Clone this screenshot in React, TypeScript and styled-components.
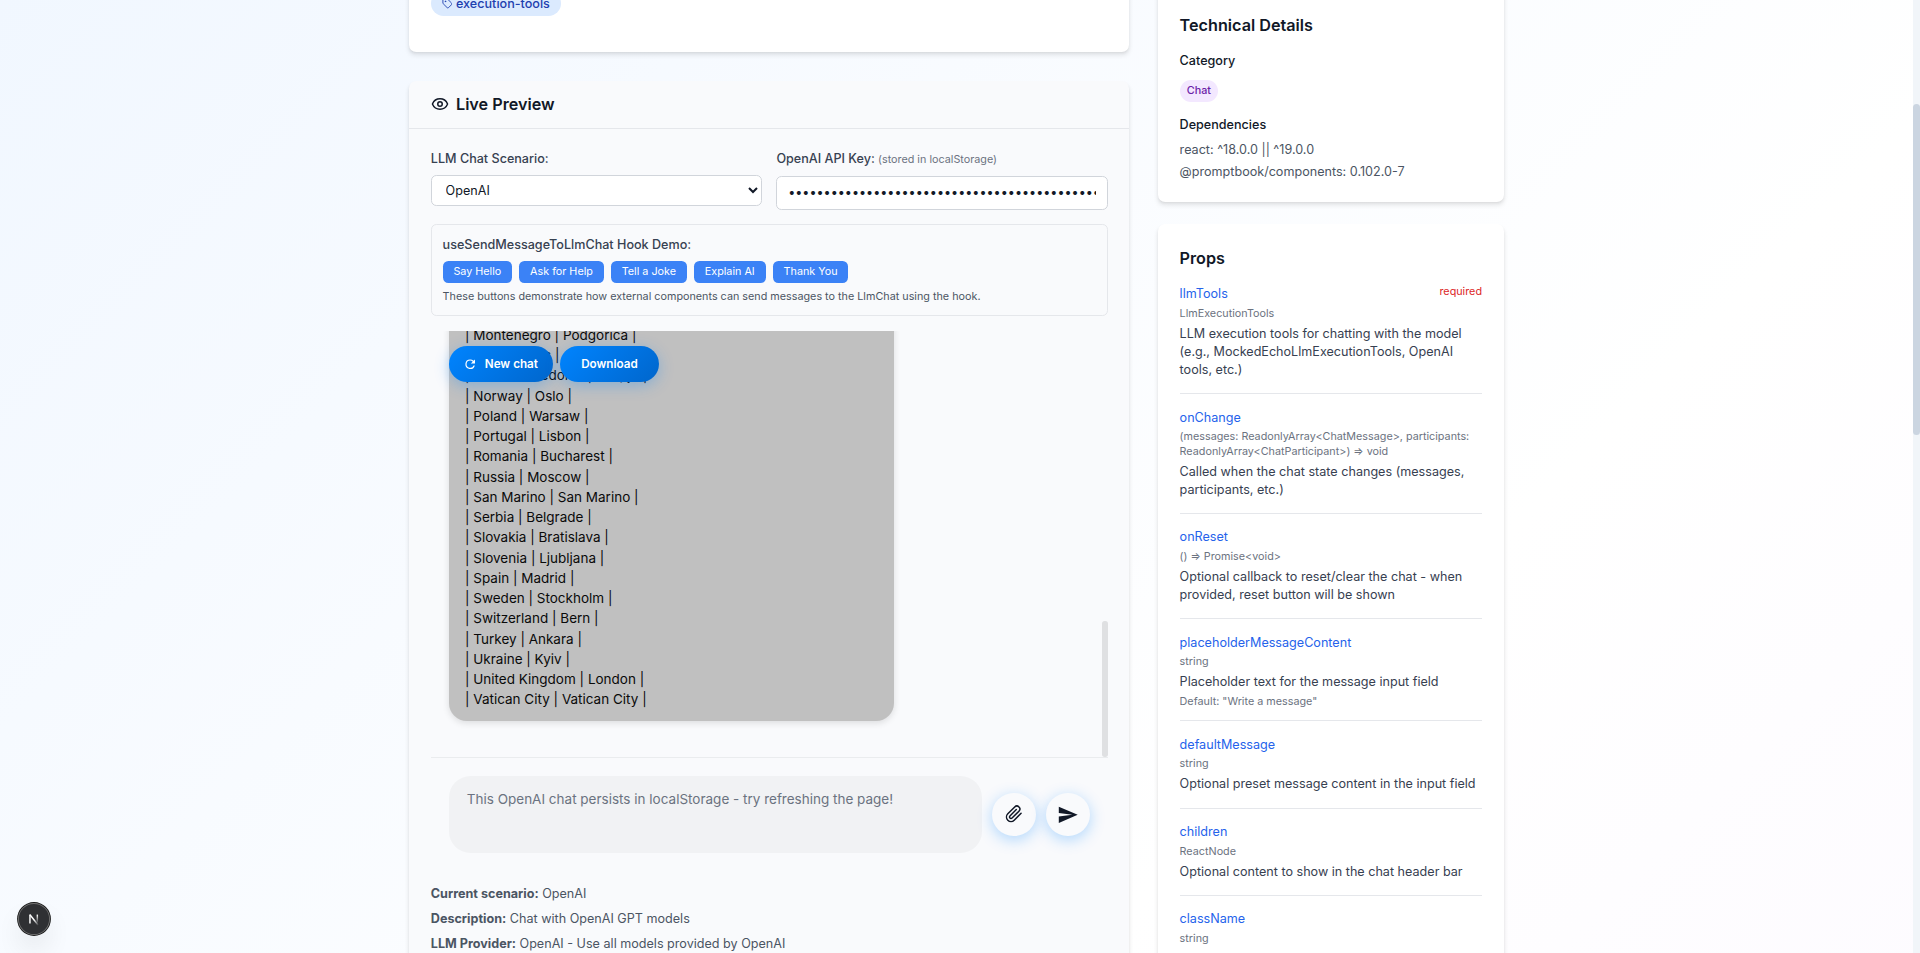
import React from 'react';
import styled, { createGlobalStyle, css } from 'styled-components';

const GlobalStyle = createGlobalStyle`
  *, *::before, *::after { box-sizing: border-box; }
  body { margin: 0; font-family: Inter, "Liberation Sans", sans-serif; color: #111827; }
  h2, h3, p, ul { margin: 0; padding: 0; font-weight: inherit; }
  button, input, select, textarea { font-family: inherit; margin: 0; }
`;

/* The whole app is shown at 90% scale. */
const Page = styled.div`
  zoom: 0.9;
  display: flex;
  height: calc(100vh / 0.9);
  overflow: hidden;
  font-size: 14px;
  line-height: 20px;
  background: linear-gradient(135deg, #eff6ff -10%, #ffffff 71%, #faf5ff 152%);
`;

const Scroller = styled.main`
  flex: 1;
  min-width: 0;
  overflow: hidden;
`;

const Columns = styled.div`
  display: grid;
  grid-template-columns: repeat(3, minmax(0, 1fr));
  gap: 32px;
  max-width: 1280px;
  margin: -34px auto 0;
  padding: 0 32px;
`;

const PrimaryColumn = styled.div`
  grid-column: span 2;
  display: flex;
  flex-direction: column;
  gap: 32px;
`;

const SideColumn = styled.aside`
  display: flex;
  flex-direction: column;
  gap: 24px;
`;

const Card = styled.section`
  border-radius: 8px;
  background: #ffffff;
  box-shadow: 0 4px 6px -1px rgba(0, 0, 0, 0.1), 0 2px 4px -2px rgba(0, 0, 0, 0.1);
`;

const TagsCard = styled(Card)`
  padding: 24px 24px 40px;
`;

const SideCard = styled(Card)<{ $tall?: boolean }>`
  padding: ${(p) => (p.$tall ? '48px' : '24px')} 24px 24px;
`;

const Tag = styled.span`
  display: flex;
  align-items: center;
  gap: 4px;
  width: fit-content;
  padding: 4px 12px;
  border-radius: 999px;
  background: #dbeafe;
  color: #1e40af;
  font-weight: 500;
`;

const CategoryBadge = styled.span`
  display: block;
  width: fit-content;
  margin-bottom: 16px;
  padding: 4px 8px;
  border-radius: 999px;
  background: #f3e8ff;
  color: #6b21a8;
  font-size: 12px;
  line-height: 16px;
  font-weight: 500;
`;

const Heading = styled.h2`
  font-size: 18px;
  line-height: 28px;
  font-weight: 600;
`;

const SideHeading = styled(Heading)`
  margin-bottom: 16px;
`;

const SubHeading = styled.h3<{ $gap: number }>`
  margin-bottom: ${(p) => p.$gap}px;
  font-size: 14px;
  font-weight: 500;
`;

const DependencyList = styled.ul`
  display: flex;
  flex-direction: column;
  gap: 4px;
  list-style: none;
  color: #4b5563;
`;

const PreviewCard = styled(Card)`
  background: #f9fafc;
`;

const PreviewHeader = styled.header`
  display: flex;
  align-items: center;
  gap: 8px;
  padding: 12px 24px;
  border-bottom: 1px solid #e5e7eb;
`;

const PreviewBody = styled.div`
  display: flex;
  flex-direction: column;
  gap: 16px;
  padding: 24px;
`;

const FieldRow = styled.div`
  display: grid;
  grid-template-columns: 1fr 1fr;
  align-items: start;
  gap: 16px;
`;

const Field = styled.div`
  display: flex;
  flex-direction: column;
  gap: 7px;
`;

const Label = styled.label`
  color: #374151;
  font-weight: 500;
`;

const Hint = styled.span`
  color: #6b7280;
  font-size: 12px;
  font-weight: 400;
`;

const controlStyle = css`
  width: 100%;
  padding: 8px 12px;
  border: 1px solid #d1d5db;
  border-radius: 6px;
  background: #ffffff;
  color: #111827;
  font-size: 14px;
`;

const Select = styled.select`
  ${controlStyle}
  height: 35px;
`;

const TextInput = styled.input`
  ${controlStyle}
  height: 38px;
  line-height: 20px;
`;

const DemoBox = styled.div`
  display: flex;
  flex-direction: column;
  gap: 8px;
  padding: 12px;
  border: 1px solid #e5e7eb;
  border-radius: 6px;
`;

const DemoTitle = styled.h3`
  color: #374151;
  font-size: 14px;
  font-weight: 500;
`;

const DemoButtons = styled.div`
  display: flex;
  flex-wrap: wrap;
  gap: 8px;
`;

const DemoButton = styled.button`
  padding: 4px 12px;
  border: 0;
  border-radius: 6px;
  background: #3b82f6;
  color: #ffffff;
  font-size: 12px;
  line-height: 16px;
  font-weight: 400;
`;

const DemoNote = styled.p`
  color: #4b5563;
  font-size: 12px;
  line-height: 16px;
`;

const Chat = styled.div`
  display: flex;
  flex-direction: column;
`;

const MessagePane = styled.div`
  position: relative;
  display: flex;
  flex-direction: column;
  justify-content: flex-end;
  height: 474px;
  padding: 0 20px 40px;
  overflow: hidden;
`;

const Bubble = styled.div`
  width: 495px;
  padding: 13px 18px;
  border-radius: 20px;
  background: #c0c0c0;
  box-shadow: 0 2px 8px rgba(0, 0, 0, 0.12);
  color: #0a0a0a;
  font-size: 15px;
  line-height: 1.5;
`;

const ChatActions = styled.div`
  position: absolute;
  top: 17px;
  left: 20px;
  display: flex;
  gap: 7px;
`;

const ChatAction = styled.button<{ $wide?: boolean }>`
  display: flex;
  align-items: center;
  gap: 8px;
  height: 40px;
  padding: ${(p) => (p.$wide ? '0 24px' : '0 17px 0 16px')};
  border: 0;
  border-radius: 20px;
  background: linear-gradient(135deg, #0084ff, #0066cc);
  box-shadow: 0 4px 16px rgba(0, 132, 255, 0.3);
  color: #ffffff;
  font-size: 13px;
  font-weight: 600;
`;

const PaneThumb = styled.span`
  position: absolute;
  right: 0;
  bottom: 0;
  width: 6px;
  height: 151px;
  border-radius: 3px;
  background: #dfe0e2;
`;

const Composer = styled.form`
  display: flex;
  align-items: center;
  gap: 12px;
  padding: 20px;
  border-top: 1px solid #eaecee;
`;

const MessageInput = styled.textarea`
  flex: 1;
  min-width: 0;
  height: 85px;
  padding: 14px 20px;
  border: 0;
  border-radius: 24px;
  background: #f1f2f4;
  color: #111827;
  font-size: 15px;
  line-height: 24px;
  resize: none;
  &::placeholder { color: #6b7280; opacity: 1; }
`;

const RoundButton = styled.button`
  display: grid;
  place-items: center;
  width: 48px;
  height: 48px;
  padding: 0;
  border: 0;
  border-radius: 50%;
  background: #f9fafc;
  box-shadow: 0 4px 16px rgba(0, 132, 255, 0.3);
  color: #111827;
`;

const Facts = styled.div`
  display: flex;
  flex-direction: column;
  gap: 8px;
  color: #4b5563;
  strong { font-weight: 700; }
`;

const PropItem = styled.li`
  margin-bottom: 16px;
  padding-bottom: 12px;
  border-bottom: 1px solid #e5e7eb;
`;

const PropList = styled.ul`
  list-style: none;
`;

const PropHead = styled.div`
  display: flex;
  align-items: flex-start;
  justify-content: space-between;
  margin-bottom: 4px;
`;

const PropName = styled.span`
  color: #2563eb;
`;

const Required = styled.span`
  color: #dc2626;
  font-size: 12px;
  line-height: 16px;
`;

const PropMeta = styled.p`
  color: #6b7280;
  font-size: 12px;
  line-height: 16px;
`;

const PropText = styled.p`
  margin: 4px 0;
  color: #374151;
`;

const ScrollTrack = styled.div`
  flex: none;
  width: 8px;
  padding-top: 115px;
  background: #f1f5f9;
`;

const ScrollThumb = styled.div`
  height: 368px;
  border-radius: 4px;
  background: #cbd5e1;
`;

const DevBadge = styled.button`
  position: fixed;
  left: 20px;
  bottom: 20px;
  display: grid;
  place-items: center;
  width: 36px;
  height: 36px;
  padding: 0;
  border: 0;
  border-radius: 50%;
  background: #2f3033;
  box-shadow: 0 0 0 1px #171717, inset 0 0 0 1px #707070, 0 16px 32px -8px rgba(0, 0, 0, 0.24);
`;

const TagIcon = () => (
  <svg width="12" height="12" viewBox="0 0 24 24" fill="none" stroke="currentColor" strokeWidth="2" strokeLinecap="round" strokeLinejoin="round" aria-hidden="true">
    <path d="M12.586 2.586A2 2 0 0 0 11.172 2H4a2 2 0 0 0-2 2v7.172a2 2 0 0 0 .586 1.414l8.704 8.704a2.426 2.426 0 0 0 3.42 0l6.58-6.58a2.426 2.426 0 0 0 0-3.42z" />
    <circle cx="7.5" cy="7.5" r="0.8" />
  </svg>
);

const EyeIcon = () => (
  <svg width="20" height="20" viewBox="0 0 24 24" fill="none" stroke="currentColor" strokeWidth="2" strokeLinecap="round" strokeLinejoin="round" aria-hidden="true">
    <path d="M2.062 12.348a1 1 0 0 1 0-.696 10.75 10.75 0 0 1 19.876 0 1 1 0 0 1 0 .696 10.75 10.75 0 0 1-19.876 0" />
    <circle cx="12" cy="12" r="3" />
  </svg>
);

const RefreshIcon = () => (
  <svg width="16" height="16" viewBox="0 0 24 24" fill="currentColor" aria-hidden="true">
    <path d="M17.65 6.35A7.96 7.96 0 0 0 12 4a8 8 0 1 0 7.73 10h-2.08A6 6 0 1 1 12 6c1.66 0 3.14.69 4.22 1.78L13 11h7V4z" />
  </svg>
);

const ClipIcon = () => (
  <svg width="20" height="20" viewBox="0 0 24 24" fill="none" stroke="currentColor" strokeWidth="2" strokeLinecap="round" strokeLinejoin="round" aria-hidden="true">
    <path d="M21.44 11.05l-9.19 9.19a6 6 0 0 1-8.49-8.49l9.19-9.19a4 4 0 0 1 5.66 5.66l-9.2 9.19a2 2 0 0 1-2.83-2.83l8.49-8.48" />
  </svg>
);

const SendIcon = () => (
  <svg width="24" height="24" viewBox="0 0 24 24" fill="currentColor" aria-hidden="true">
    <path d="M2 21l21-9L2 3v7l15 2-15 2z" />
  </svg>
);

const FrameworkMark = () => (
  <svg width="18" height="18" viewBox="0 0 18 18" fill="none" strokeWidth="1.6" aria-hidden="true">
    <defs>
      <linearGradient id="slant" x1="9" y1="10" x2="14" y2="16" gradientUnits="userSpaceOnUse">
        <stop stopColor="#fff" />
        <stop offset="1" stopColor="#fff" stopOpacity="0" />
      </linearGradient>
      <linearGradient id="stem" x1="12" y1="4" x2="12" y2="14" gradientUnits="userSpaceOnUse">
        <stop stopColor="#fff" />
        <stop offset="1" stopColor="#fff" stopOpacity="0" />
      </linearGradient>
    </defs>
    <path d="M4.4 4.2L13.4 15.6" stroke="url(#slant)" />
    <path d="M4.4 14V4" stroke="#fff" />
    <path d="M12.6 4v9" stroke="url(#stem)" />
  </svg>
);

const capitals = [
  ['Montenegro', 'Podgorica'],
  ['Netherlands', 'Amsterdam'],
  ['North Macedonia', 'Skopje'],
  ['Norway', 'Oslo'],
  ['Poland', 'Warsaw'],
  ['Portugal', 'Lisbon'],
  ['Romania', 'Bucharest'],
  ['Russia', 'Moscow'],
  ['San Marino', 'San Marino'],
  ['Serbia', 'Belgrade'],
  ['Slovakia', 'Bratislava'],
  ['Slovenia', 'Ljubljana'],
  ['Spain', 'Madrid'],
  ['Sweden', 'Stockholm'],
  ['Switzerland', 'Bern'],
  ['Turkey', 'Ankara'],
  ['Ukraine', 'Kyiv'],
  ['United Kingdom', 'London'],
  ['Vatican City', 'Vatican City'],
];

const demoActions = ['Say Hello', 'Ask for Help', 'Tell a Joke', 'Explain AI', 'Thank You'];

const facts = [
  ['Current scenario:', 'OpenAI'],
  ['Description:', 'Chat with OpenAI GPT models'],
  ['LLM Provider:', 'OpenAI - Use all models provided by OpenAI'],
];

interface PropDoc {
  name: string;
  type: string;
  text?: string;
  required?: boolean;
  fallback?: string;
}

const propDocs: PropDoc[] = [
  {
    name: 'llmTools',
    type: 'LlmExecutionTools',
    text: 'LLM execution tools for chatting with the model (e.g., MockedEchoLlmExecutionTools, OpenAI tools, etc.)',
    required: true,
  },
  {
    name: 'onChange',
    type: '(messages: ReadonlyArray<ChatMessage>, participants: ReadonlyArray<ChatParticipant>) => void',
    text: 'Called when the chat state changes (messages, participants, etc.)',
  },
  {
    name: 'onReset',
    type: '() => Promise<void>',
    text: 'Optional callback to reset/clear the chat - when provided, reset button will be shown',
  },
  {
    name: 'placeholderMessageContent',
    type: 'string',
    text: 'Placeholder text for the message input field',
    fallback: '"Write a message"',
  },
  { name: 'defaultMessage', type: 'string', text: 'Optional preset message content in the input field' },
  { name: 'children', type: 'ReactNode', text: 'Optional content to show in the chat header bar' },
  { name: 'className', type: 'string' },
];

export default function App() {
  return (
    <>
      <GlobalStyle />
      <Page>
        <Scroller>
          <Columns>
            <PrimaryColumn>
              <TagsCard>
                <Tag>
                  <TagIcon />
                  execution-tools
                </Tag>
              </TagsCard>

              <PreviewCard>
                <PreviewHeader>
                  <EyeIcon />
                  <Heading>Live Preview</Heading>
                </PreviewHeader>
                <PreviewBody>
                  <FieldRow>
                    <Field>
                      <Label htmlFor="scenario">LLM Chat Scenario:</Label>
                      <Select id="scenario" defaultValue="OpenAI">
                        <option>OpenAI</option>
                      </Select>
                    </Field>
                    <Field>
                      <Label htmlFor="api-key">
                        OpenAI API Key: <Hint>(stored in localStorage)</Hint>
                      </Label>
                      <TextInput id="api-key" type="password" autoComplete="off" defaultValue={'0'.repeat(64)} />
                    </Field>
                  </FieldRow>

                  <DemoBox>
                    <DemoTitle>useSendMessageToLlmChat Hook Demo:</DemoTitle>
                    <DemoButtons>
                      {demoActions.map((label) => (
                        <DemoButton key={label} type="button">{label}</DemoButton>
                      ))}
                    </DemoButtons>
                    <DemoNote>
                      These buttons demonstrate how external components can send messages to the LlmChat using the hook.
                    </DemoNote>
                  </DemoBox>

                  <Chat>
                    <MessagePane>
                      <Bubble>
                        {capitals.map(([country, capital]) => (
                          <p key={country}>| {country} | {capital} |</p>
                        ))}
                      </Bubble>
                      <ChatActions>
                        <ChatAction type="button">
                          <RefreshIcon />
                          New chat
                        </ChatAction>
                        <ChatAction type="button" $wide>Download</ChatAction>
                      </ChatActions>
                      <PaneThumb />
                    </MessagePane>
                    <Composer onSubmit={(e) => e.preventDefault()}>
                      <MessageInput
                        aria-label="Message"
                        placeholder="This OpenAI chat persists in localStorage - try refreshing the page!"
                      />
                      <RoundButton type="button" aria-label="Attach file"><ClipIcon /></RoundButton>
                      <RoundButton type="submit" aria-label="Send"><SendIcon /></RoundButton>
                    </Composer>
                  </Chat>

                  <Facts>
                    {facts.map(([term, value]) => (
                      <p key={term}><strong>{term}</strong> {value}</p>
                    ))}
                  </Facts>
                </PreviewBody>
              </PreviewCard>
            </PrimaryColumn>

            <SideColumn>
              <SideCard $tall>
                <SideHeading>Technical Details</SideHeading>
                <SubHeading $gap={11}>Category</SubHeading>
                <CategoryBadge>Chat</CategoryBadge>
                <SubHeading $gap={8}>Dependencies</SubHeading>
                <DependencyList>
                  <li>react: ^18.0.0 || ^19.0.0</li>
                  <li>@promptbook/components: 0.102.0-7</li>
                </DependencyList>
              </SideCard>

              <SideCard>
                <SideHeading>Props</SideHeading>
                <PropList>
                  {propDocs.map((doc) => (
                    <PropItem key={doc.name}>
                      <PropHead>
                        <PropName>{doc.name}</PropName>
                        {doc.required && <Required>required</Required>}
                      </PropHead>
                      <PropMeta>{doc.type}</PropMeta>
                      {doc.text && <PropText>{doc.text}</PropText>}
                      {doc.fallback && <PropMeta>Default: {doc.fallback}</PropMeta>}
                    </PropItem>
                  ))}
                </PropList>
              </SideCard>
            </SideColumn>
          </Columns>
        </Scroller>
        <ScrollTrack>
          <ScrollThumb />
        </ScrollTrack>
        <DevBadge type="button" aria-label="Open developer tools"><FrameworkMark /></DevBadge>
      </Page>
    </>
  );
}
